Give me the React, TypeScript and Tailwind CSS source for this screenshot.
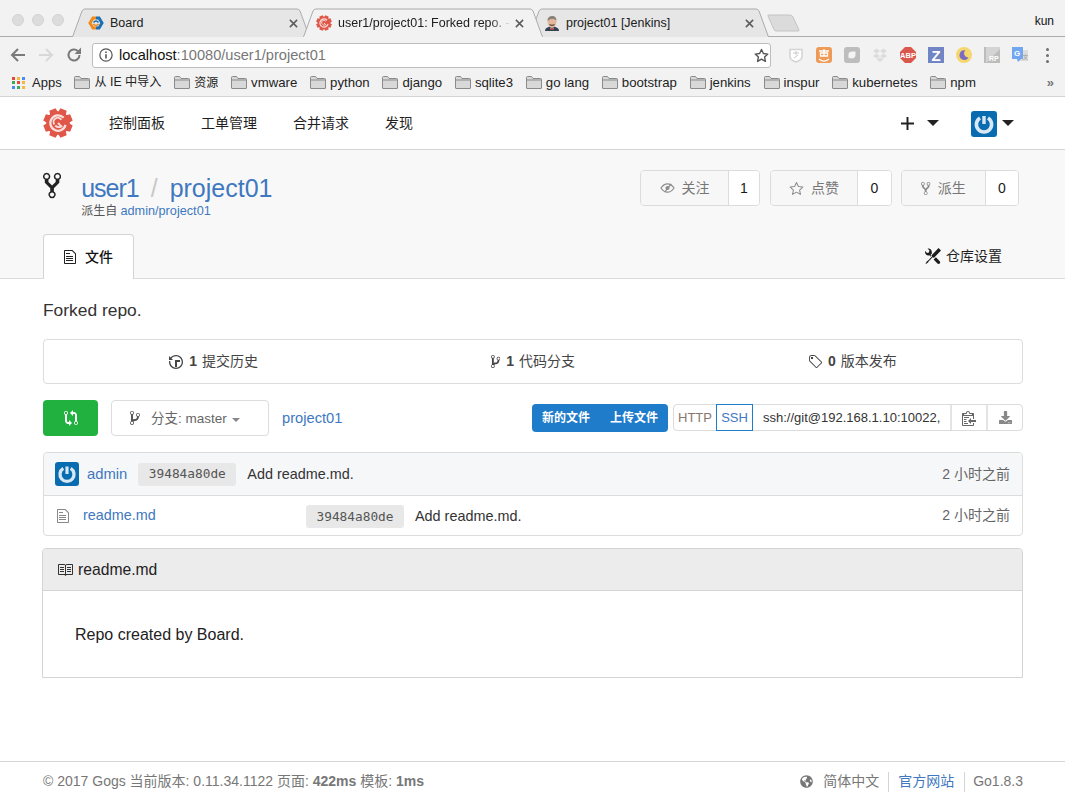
import React from "react";
import { FaDownload, FaGlobeAmericas } from "react-icons/fa";

const SANS = "font-['Liberation_Sans','Noto_Sans_CJK_SC',sans-serif]";
const P: Record<string, [number, string]> = {
  fork: [10, "M8 1a1.993 1.993 0 0 0-1 3.72V6L5 8 3 6V4.72A1.993 1.993 0 0 0 2 1a1.993 1.993 0 0 0-1 3.72V6.5l3 3v1.78A1.993 1.993 0 0 0 5 15a1.993 1.993 0 0 0 1-3.72V9.5l3-3V4.72A1.993 1.993 0 0 0 8 1zM2 4.2C1.34 4.2.8 3.65.8 3c0-.65.55-1.2 1.2-1.2.65 0 1.2.55 1.2 1.2 0 .65-.55 1.2-1.2 1.2zm3 10c-.66 0-1.2-.55-1.2-1.2 0-.65.55-1.2 1.2-1.2.65 0 1.2.55 1.2 1.2 0 .65-.55 1.2-1.2 1.2zm3-10c-.66 0-1.2-.55-1.2-1.2 0-.65.55-1.2 1.2-1.2.65 0 1.2.55 1.2 1.2 0 .65-.55 1.2-1.2 1.2z"],
  branch: [10, "M10 5c0-1.11-.89-2-2-2a1.993 1.993 0 0 0-1 3.72v.3c-.02.52-.23.98-.63 1.38-.4.4-.86.61-1.38.63-.83.02-1.48.16-2 .45V4.72a1.993 1.993 0 0 0-1-3.72C.88 1 0 1.89 0 3a2 2 0 0 0 1 1.72v6.56c-.59.35-1 .99-1 1.72 0 1.11.89 2 2 2 1.11 0 2-.89 2-2 0-.53-.2-1-.53-1.36.09-.06.48-.41.59-.47.25-.11.56-.17.94-.17 1.05-.05 1.95-.45 2.75-1.25S8.95 7.77 9 6.73h-.02C9.59 6.37 10 5.73 10 5zM2 1.8c.66 0 1.2.55 1.2 1.2 0 .65-.55 1.2-1.2 1.2C1.35 4.2.8 3.65.8 3c0-.65.55-1.2 1.2-1.2zm0 12.41c-.66 0-1.2-.55-1.2-1.2 0-.65.55-1.2 1.2-1.2.65 0 1.2.55 1.2 1.2 0 .65-.55 1.2-1.2 1.2zm6-8c-.66 0-1.2-.55-1.2-1.2 0-.65.55-1.2 1.2-1.2.65 0 1.2.55 1.2 1.2 0 .65-.55 1.2-1.2 1.2z"],
  history: [14, "M8 13H6V6h5v2H8v5zM7 1C4.81 1 2.87 2.02 1.59 3.59L0 2v4h4L2.5 4.5C3.55 3.17 5.17 2.3 7 2.3c3.14 0 5.7 2.56 5.7 5.7s-2.56 5.7-5.7 5.7A5.71 5.71 0 0 1 1.3 8c0-.34.03-.67.09-1H.08C.03 7.33 0 7.66 0 8c0 3.86 3.14 7 7 7s7-3.14 7-7-3.14-7-7-7z"],
  tag: [14, "M7.73 1.73C7.26 1.26 6.62 1 5.96 1H3.5C2.13 1 1 2.13 1 3.5v2.47c0 .66.27 1.3.73 1.77l6.06 6.06c.39.39 1.02.39 1.41 0l4.59-4.59a.996.996 0 0 0 0-1.41L7.73 1.73zM2.38 7.09c-.31-.3-.47-.7-.47-1.13V3.5c0-.88.72-1.59 1.59-1.59h2.47c.42 0 .83.16 1.13.47l6.14 6.13-4.73 4.73-6.13-6.15zM3.01 3h2v2H3V3h.01z"],
  file: [12, "M6 5H2V4h4v1zM2 8h7V7H2v1zm0 2h7V9H2v1zm0 2h7v-1H2v1zm10-7.5V14c0 .55-.45 1-1 1H1c-.55 0-1-.45-1-1V2c0-.55.45-1 1-1h7.5L12 4.5zM11 5L8 2H1v12h10V5z"],
  book: [16, "M3 5h4v1H3V5zm0 3h4V7H3v1zm0 2h4V9H3v1zm11-5h-4v1h4V5zm0 2h-4v1h4V7zm0 2h-4v1h4V9zm2-6v9c0 .55-.45 1-1 1H9.5l-1 1-1-1H2c-.55 0-1-.45-1-1V3c0-.55.45-1 1-1h5.5l1 1 1-1H15c.55 0 1 .45 1 1zm-8 .5L7.5 3H2v9h6V3.5zm7-.5H9.5l-.5.5V12h6V3z"],
  tools: [16, "M4.48 7.27c.26.26 1.28 1.33 1.28 1.33l.56-.58-.88-.91 1.69-1.8s-.76-.74-.43-.45c.32-1.19.03-2.51-.87-3.44C4.93.5 3.66.2 2.52.51l1.93 2-.51 1.96-1.89.52-1.93-2C-.19 4.17.1 5.48 1 6.4c.94.98 2.29 1.26 3.48.87zm6.44 1.94l-2.33 2.3 3.84 3.98c.31.33.73.49 1.14.49.41 0 .82-.16 1.14-.49.63-.65.63-1.7 0-2.35l-3.79-3.93zM16 2.53L13.55 0 6.33 7.46l.88.91-4.31 4.46-.99.53-1.39 2.27.35.37 2.2-1.44.51-1.02L7.9 9.08l.88.91L16 2.53z"],
  compare: [14, "M5 12H4c-.27-.02-.48-.11-.69-.31-.21-.2-.3-.42-.31-.69V4.72A1.993 1.993 0 0 0 2 1a1.993 1.993 0 0 0-1 3.72V11c.03.78.34 1.47.94 2.06.6.59 1.28.91 2.06.94h1v2l3-3-3-3v2zM2 1.8c.66 0 1.2.55 1.2 1.2 0 .65-.55 1.2-1.2 1.2C1.35 4.2.8 3.65.8 3c0-.65.55-1.2 1.2-1.2zm11 9.48V5c-.03-.78-.34-1.47-.94-2.06-.6-.59-1.28-.91-2.06-.94H9V0L6 3l3 3V4h1c.27.02.48.11.69.31.21.2.3.42.31.69v6.28A1.993 1.993 0 0 0 12 15a1.993 1.993 0 0 0 1-3.72zm-1 2.92c-.66 0-1.2-.55-1.2-1.2 0-.65.55-1.2 1.2-1.2.65 0 1.2.55 1.2 1.2 0 .65-.55 1.2-1.2 1.2z"],
  clippy: [14, "M2 13h4v1H2v-1zm5-6H2v1h5V7zm2 3V8l-3 3 3 3v-2h5v-2H9zM4.5 9H2v1h2.5V9zM2 12h2.5v-1H2v1zm9 1h1v2c-.02.28-.11.52-.3.7-.19.18-.42.28-.7.3H1c-.55 0-1-.45-1-1V4c0-.55.45-1 1-1h3c0-1.11.89-2 2-2 1.11 0 2 .89 2 2h3c.55 0 1 .45 1 1v5h-1V6H1v9h10v-2zM2 5h8c0-.55-.45-1-1-1H8c-.55 0-1-.45-1-1s-.45-1-1-1-1 .45-1 1-.45 1-1 1H3c-.55 0-1 .45-1 1z"],
};

function O({ n, h, c }: { n: string; h: number; c?: string }) {
  const [w, d] = P[n];
  return (
    <svg viewBox={`0 0 ${w} 16`} width={(w * h) / 16} height={h} fill="currentColor" className={`shrink-0 ${c ?? ""}`}>
      <path d={d} />
    </svg>
  );
}

function Star({ s, c, sw = 1.2 }: { s: number; c: string; sw?: number }) {
  return (
    <svg viewBox="0 0 16 16" width={s} height={s} className="shrink-0">
      <path d="M8 1.6l2 4.3 4.7.6-3.4 3.2.9 4.6L8 11.9l-4.2 2.4.9-4.6L1.3 6.5 6 5.9z" fill="none" stroke={c} strokeWidth={sw} strokeLinejoin="round" />
    </svg>
  );
}

function Caret({ w, h, c }: { w: number; h: number; c: string }) {
  return (
    <svg viewBox="0 0 10 5" width={w} height={h} className="shrink-0">
      <path d="M0 0h10L5 5z" fill={c} />
    </svg>
  );
}

function GogsLogo({ s }: { s: number }) {
  const teeth = [22.5, 67.5, 112.5, 157.5, 202.5, 247.5, 292.5, 337.5];
  return (
    <svg viewBox="0 0 32 32" width={s} height={s} className="shrink-0">
      {teeth.map((a) => (
        <path key={a} d="M12.4 0.5h7.2l1.2 7h-9.600z" fill="#e0574a" transform={`rotate(${a} 16 16)`} />
      ))}
      <circle cx="16" cy="16" r="12.500" fill="#e0574a" />
      <path d="M22 10.500A8.200 8.200 0 1 0 24 18" fill="none" stroke="#f9e0dc" strokeWidth="2.400" />
      <path d="M19.500 12.500A4.500 4.500 0 0 0 12 17.500" fill="none" stroke="#f9e0dc" strokeWidth="2" />
      <path d="M13 19c2.500 1.800 4.500 1.800 6.500.6l-3.500-3.600" fill="none" stroke="#f9e0dc" strokeWidth="2" />
    </svg>
  );
}

function Avatar({ s }: { s: number }) {
  return (
    <svg viewBox="0 0 26 26" width={s} height={s} className="shrink-0 rounded-[3px]">
      <rect width="26" height="26" fill="#0a6cb0" />
      <path d="M9 7a7.600 7.600 0 1 0 8 0" fill="none" stroke="#d8e9f5" strokeWidth="3.600" />
      <path d="M13 5v8" stroke="#d8e9f5" strokeWidth="3.400" />
    </svg>
  );
}

function BoardIcon() {
  return (
    <svg viewBox="0 0 16 16" width={16} height={16} className="shrink-0">
      <path d="M8 3H5L2 8l3 5h3" fill="none" stroke="#f08a1c" strokeWidth="3" />
      <path d="M8 3h3l3 5-3 5H8" fill="none" stroke="#1a6fb5" strokeWidth="3" />
      <path d="M5.500 7.500C7 5.500 9 5.500 10.500 7.500" fill="none" stroke="#1a6fb5" strokeWidth="1.600" />
      <path d="M5.500 9C7 11 9 11 10.500 9" fill="none" stroke="#f08a1c" strokeWidth="1.600" />
    </svg>
  );
}

function JenkinsIcon() {
  return (
    <svg viewBox="0 0 16 16" width={16} height={16} className="shrink-0">
      <path d="M1 16c0-3 3-4.500 7-4.500s7 1.500 7 4.500z" fill="#33404f" />
      <path d="M6.500 12.500h3v2h-3z" fill="#e8e4dc" />
      <path d="M6 14l2-1 2 1-2 1z" fill="#b3261e" />
      <ellipse cx="8" cy="7" rx="4.500" ry="5.500" fill="#e3b79b" />
      <path d="M3.500 6C3.500 2 6 1 8.500 1s4 2 4 4.500C11 3.500 6 3 3.500 6z" fill="#8a8178" />
      <path d="M5.500 9.500c1.500 1 3.500 1 5 0" fill="none" stroke="#5b4b3e" strokeWidth="1.200" />
    </svg>
  );
}

function Tab({ w, active, icon, title, z, fade, c }: { w: number; active?: boolean; icon: React.ReactNode; title: string; z: string; fade?: boolean; c: string }) {
  const fill = active ? "#f2f2f2" : "#e6e6e6";
  return (
    <div className={`relative h-[29px] shrink-0 flex items-center ${z} ${c}`} style={{ width: w }}>
      <svg className="absolute inset-0" width={w} height={29} viewBox={`0 0 ${w} 29`}>
        <path d={`M0.500 29L10 3Q11 1 13 1H${w - 13}Q${w - 11} 1 ${w - 10} 3L${w - 0.5} 29`} fill={fill} stroke="#ababab" />
        {active && <rect x="1" y="28" width={w - 2} height="1" fill={fill} />}
      </svg>
      <div className="relative flex items-center w-full pt-[1px]">
        {icon}
        <span className="ml-[6px] text-[12.500px] text-[#202020] whitespace-nowrap overflow-hidden flex-1">
          {fade ? <span className="[mask-image:linear-gradient(to_right,#000_88%,transparent)] block">{title}</span> : title}
        </span>
        <svg viewBox="0 0 10 10" width={9} height={9} className="shrink-0 ml-1">
          <path d="M1 1l8 8M9 1l-8 8" stroke="#5c5c5c" strokeWidth="1.700" />
        </svg>
      </div>
    </div>
  );
}

function FolderIcon() {
  return (
    <svg viewBox="0 0 16 13" width={16} height={13} className="shrink-0">
      <path d="M.5 12V1.500Q.5.500 1.500.500h4l1.500 2h7.500q1 0 1 1V12q0 .500-.5.500H1q-.5 0-.5-.5z" fill="#d8d8d8" stroke="#8a8a8a" />
      <path d="M.500 4h15" stroke="#8a8a8a" />
    </svg>
  );
}

function Bm({ t, c }: { t: string; c?: string }) {
  return (
    <div className="flex items-center gap-[4px] shrink-0 ml-[12.800px]">
      <FolderIcon />
      <span className={`text-[#222] whitespace-nowrap ${c ?? "text-[13.200px]"}`}>{t}</span>
    </div>
  );
}

function Ext({ children, c }: { children: React.ReactNode; c?: string }) {
  return <div className={`w-4 h-4 shrink-0 flex items-center justify-center ${c ?? "ml-[12px]"}`}>{children}</div>;
}

function Extensions() {
  return (
    <div className="flex items-center ml-[17px]">
      <Ext c="ml-0">
        <svg viewBox="0 0 16 16" width={16} height={16}>
          <path d="M2 2.500h12v7c0 3-3 4.500-6 5.500-3-1-6-2.500-6-5.500z" fill="#fff" stroke="#d3d3d3" strokeWidth="1.500" />
          <path d="M5 6h6M8 4v4M6 11l4-3" stroke="#c8c8c8" />
        </svg>
      </Ext>
      <Ext>
        <svg viewBox="0 0 16 16" width={16} height={16}>
          <rect width="16" height="16" rx="3" fill="#ee9a56" />
          <path d="M3 4h10M8 2v7M4.500 6h7v3h-7zM3 12c3 2.500 7 2.500 10 0" fill="none" stroke="#fff" strokeWidth="1.300" />
        </svg>
      </Ext>
      <Ext>
        <svg viewBox="0 0 16 16" width={16} height={16}>
          <rect width="16" height="16" rx="3" fill="#bdbdbd" />
          <path d="M4.500 11V7.500C4.500 5.500 6 4.500 8 4.500h3.500V8c0 2-1.500 3.500-3.500 3.500z" fill="#f4f4f4" />
        </svg>
      </Ext>
      <Ext>
        <svg viewBox="0 0 16 16" width={16} height={16}>
          <path d="M4.500 1.500L8 4 4.500 6.500 1 4zM11.500 1.500L15 4l-3.500 2.500L8 4zM4.500 6.500L8 9l-3.500 2.500L1 9zM11.500 6.500L15 9l-3.500 2.500L8 9zM4.500 12.500L8 10.500l3.500 2L8 15z" fill="#dcdcdc" />
        </svg>
      </Ext>
      <Ext>
        <svg viewBox="0 0 16 16" width={16} height={16}>
          <path d="M5 0h6l5 5v6l-5 5H5l-5-5V5z" fill="#d9574d" />
          <text x="8" y="10.800" textAnchor="middle" fontSize="7.500" fill="#fff" fontFamily="Liberation Sans" fontWeight="700">ABP</text>
        </svg>
      </Ext>
      <Ext>
        <div className="w-4 h-4 bg-[#7184c4] flex items-center justify-center text-[15px] leading-none font-bold text-white">Z</div>
      </Ext>
      <Ext>
        <svg viewBox="0 0 16 16" width={16} height={16}>
          <circle cx="8" cy="8" r="8" fill="#f5d76e" />
          <path d="M9.500 3.500a4.800 4.800 0 1 0 3 7 4 4 0 0 1-3-7z" fill="#7a6cc0" />
        </svg>
      </Ext>
      <Ext>
        <svg viewBox="0 0 16 16" width={16} height={16}>
          <rect width="16" height="16" fill="#d4d4d4" />
          <rect x="0" width="2" height="16" fill="#bcbcbc" />
          <path d="M2 16L16 2v14z" fill="#bdbdbd" />
          <text x="5" y="14" fontSize="7" fill="#fff" fontFamily="Liberation Sans" fontWeight="700">RP</text>
        </svg>
      </Ext>
      <Ext>
        <svg viewBox="0 0 16 16" width={16} height={16}>
          <rect x="5" y="3" width="11" height="11" fill="#dcdcdc" />
          <rect width="11" height="12" fill="#72a7f0" />
          <path d="M5 12h4l-3 3z" fill="#72a7f0" />
          <text x="2" y="9" fontSize="8" fill="#fff" fontFamily="Liberation Sans" fontWeight="700">G</text>
          <text x="10.500" y="12" fontSize="6" fill="#9a9a9a" fontFamily="Noto Sans CJK SC">文</text>
        </svg>
      </Ext>
      <div className="ml-[18px] flex flex-col gap-[3px]">
        <div className="w-[3px] h-[3px] rounded-full bg-[#6e6e6e]" />
        <div className="w-[3px] h-[3px] rounded-full bg-[#6e6e6e]" />
        <div className="w-[3px] h-[3px] rounded-full bg-[#6e6e6e]" />
      </div>
    </div>
  );
}

function Browser() {
  return (
    <div className="bg-[#f2f2f2] border-b border-[#d3d3d3]">
      <div className="relative h-[37px] border-b border-[#ababab] flex items-end">
        <div className="flex items-center gap-[8px] pl-[12px] self-start pt-[14px] w-[72px] shrink-0">
          <div className="w-3 h-3 rounded-full bg-[#dcdcdc] border border-[#d3d3d3]" />
          <div className="w-3 h-3 rounded-full bg-[#dcdcdc] border border-[#d3d3d3]" />
          <div className="w-3 h-3 rounded-full bg-[#dcdcdc] border border-[#d3d3d3]" />
        </div>
        <div className="flex items-end -mb-px">
          <Tab w={238} icon={<BoardIcon />} title="Board" z="z-0" c="pl-[16px] pr-[12px]" />
          <Tab w={240} active icon={<GogsLogo s={16} />} title="user1/project01: Forked repo. -" z="z-20" fade c="-ml-[7px] pl-[13px] pr-[19px]" />
          <Tab w={240} icon={<JenkinsIcon />} title="project01 [Jenkins]" z="z-10" c="-ml-[14px] pl-[15px] pr-[15px]" />
          <svg width={34} height={18} viewBox="0 0 34 18" className="shrink-0 -ml-[2px] mb-[5px]">
            <path d="M1 1h22q2 0 3 2l6 13q.5 1-1 1H9q-1.500 0-2-1.500L1 2z" fill="#dbdbdb" stroke="#c4c4c4" />
          </svg>
        </div>
        <span className="absolute right-[11px] top-[13px] text-[12px] text-[#111] leading-[16px]">kun</span>
      </div>
      <div className="h-[33px] pt-[3px] flex items-center">
        <div className="flex items-center pl-[10px] w-[92px] shrink-0 gap-[12px]">
          <svg viewBox="0 0 16 16" width={16} height={16} className="shrink-0">
            <path d="M15 8H2.500M8 2L2 8l6 6" fill="none" stroke="#7a7a7a" strokeWidth="2" />
          </svg>
          <svg viewBox="0 0 16 16" width={16} height={16} className="shrink-0">
            <path d="M1 8h12.500M8 2l6 6-6 6" fill="none" stroke="#d8d8d8" strokeWidth="2" />
          </svg>
          <svg viewBox="0 0 16 16" width={16} height={16} className="shrink-0">
            <path d="M13.500 8A5.500 5.500 0 1 1 11.800 4" fill="none" stroke="#7a7a7a" strokeWidth="2" />
            <path d="M15 0.500V7H8.500z" fill="#7a7a7a" />
          </svg>
        </div>
        <div className="w-[679px] h-[25px] bg-white border border-[#bdbdbd] rounded-[3px] flex items-center pl-[6px] pr-[1px] shrink-0">
          <svg viewBox="0 0 16 16" width={14} height={14} className="shrink-0">
            <circle cx="8" cy="8" r="7" fill="none" stroke="#555" strokeWidth="1.400" />
            <path d="M8 7v5M8 4v1.800" stroke="#555" strokeWidth="1.800" />
          </svg>
          <span className="ml-[6px] pt-[1px] text-[14.600px] text-[#777] flex-1 whitespace-nowrap">
            <span className="text-[#111]">localhost</span>:10080/user1/project01
          </span>
          <Star s={15} c="#555" sw={1.500} />
        </div>
        <Extensions />
      </div>
      <div className="h-[26px] flex items-center pl-[12px] pb-[1px]">
        <div className="grid grid-cols-3 gap-[1.500px] w-[13px] shrink-0">
          {["#e5493a", "#f6b83c", "#4a8af4", "#3bab59", "#e5493a", "#f6b83c", "#4a8af4", "#3bab59", "#f6b83c"].map((c, i) => (
            <div key={i} className="w-[3px] h-[3px]" style={{ background: c }} />
          ))}
        </div>
        <span className="ml-[7px] text-[13px] text-[#222]">Apps</span>
        <Bm t="从 IE 中导入" c="text-[12.200px]" />
        <Bm t="资源" c="text-[12px]" />
        <Bm t="vmware" />
        <Bm t="python" />
        <Bm t="django" />
        <Bm t="sqlite3" />
        <Bm t="go lang" />
        <Bm t="bootstrap" />
        <Bm t="jenkins" />
        <Bm t="inspur" />
        <Bm t="kubernetes" />
        <Bm t="npm" />
        <span className="ml-auto mr-[11px] text-[13px] leading-none text-[#777] font-bold">»</span>
      </div>
    </div>
  );
}

function TopNav() {
  return (
    <div className="h-[53px] flex items-center border-b border-[#d4d4d5] pl-[43px] pr-[51px] text-[14px] text-[#1f1f1f]">
      <GogsLogo s={30} />
      <span className="ml-[36px] pt-[1px]">控制面板</span>
      <span className="ml-[36px] pt-[1px]">工单管理</span>
      <span className="ml-[36px] pt-[1px]">合并请求</span>
      <span className="ml-[36px] pt-[1px]">发现</span>
      <div className="ml-auto flex items-center">
        <svg viewBox="0 0 12 12" width={13} height={13} className="shrink-0">
          <path d="M6 0v12M0 6h12" stroke="#222" strokeWidth="1.800" />
        </svg>
        <span className="ml-[13px]"><Caret w={12} h={6} c="#222" /></span>
        <span className="ml-[32px] mt-[2px]"><Avatar s={26} /></span>
        <span className="ml-[5px] -mt-[1px]"><Caret w={12} h={6} c="#222" /></span>
      </div>
    </div>
  );
}

function StatBtn({ icon, label, n, lw, rw, c }: { icon: React.ReactNode; label: string; n: string; lw: number; rw: number; c?: string }) {
  return (
    <div className={`flex h-[36px] border border-[#dcdcdc] rounded-[4px] overflow-hidden text-[14px] shrink-0 ${c ?? ""}`}>
      <div className="bg-[#f7f7f7] flex items-center justify-center gap-[7px] text-[#767676] border-r border-[#dcdcdc]" style={{ width: lw }}>
        {icon}
        <span>{label}</span>
      </div>
      <div className="bg-white flex items-center justify-center text-[#1a1a1a]" style={{ width: rw }}>{n}</div>
    </div>
  );
}

function RepoHeader() {
  return (
    <div className="bg-[#f8f8f8] border-b border-[#dcdcdc] h-[129px] px-[43px] flex flex-col justify-between">
      <div className="flex pt-[20px]">
        <O n="fork" h={29} c="text-[#222] mt-[1px]" />
        <div className="ml-[20px]">
          <div className="text-[25px] leading-[36px] text-[#4078c0] whitespace-nowrap">
            <span className="tracking-[-1px]">user1</span>
            <span className="text-[#c8c8c8] mx-[12px]">/</span>project01
          </div>
          <div className="text-[12px] leading-[12px] -mt-[1px] text-[#555]">
            派生自 <span className="text-[12.700px] text-[#4078c0]">admin/project01</span>
          </div>
        </div>
        <div className="ml-auto flex mr-[3px]">
          <StatBtn
            lw={88}
            rw={30}
            label="关注"
            n="1"
            icon={
              <svg viewBox="0 0 16 12" width={15} height={12} className="shrink-0">
                <path d="M1 6c2-3 4.500-4.500 7-4.500S13 3 15 6c-2 3-4.500 4.500-7 4.500S3 9 1 6z" fill="none" stroke="#8c8c8c" strokeWidth="1.300" />
                <path d="M5 10.500L12 1.500" stroke="#8c8c8c" strokeWidth="1.300" />
                <circle cx="8" cy="6" r="2.200" fill="#8c8c8c" />
              </svg>
            }
          />
          <StatBtn lw={87} rw={33} label="点赞" n="0" c="ml-[10px]" icon={<Star s={15} c="#8c8c8c" sw={1.100} />} />
          <StatBtn lw={84} rw={32} label="派生" n="0" c="ml-[9px]" icon={<O n="fork" h={15} c="text-[#8c8c8c]" />} />
        </div>
      </div>
      <div className="flex items-end -mb-px">
        <div className="h-[45px] w-[91px] bg-white border border-b-0 border-[#d4d4d5] rounded-t-[4px] flex items-center justify-center gap-[9px] text-[14px] text-[#111] font-medium">
          <O n="file" h={16} c="text-[#222]" />
          <span>文件</span>
        </div>
        <div className="ml-auto h-[45px] flex items-center gap-[5px] pr-[20px] text-[14px] text-[#222] pb-px">
          <O n="tools" h={16} c="text-[#1d1d1d]" />
          <span>仓库设置</span>
        </div>
      </div>
    </div>
  );
}

function StatCell({ icon, n, label }: { icon: React.ReactNode; n: string; label: string }) {
  return (
    <div className="flex-1 flex items-center justify-center">
      {icon}
      <span className="font-bold ml-[6px]">{n}</span>
      <span className="text-[14px] ml-[5px]">{label}</span>
    </div>
  );
}

function Sha() {
  return (
    <span className="h-[23px] w-[98px] rounded-[3px] bg-[#e8e8e8] text-[#555] text-[12.800px] flex items-center justify-center font-['DejaVu_Sans_Mono',monospace] shrink-0">39484a80de</span>
  );
}

export default function App() {
  return (
    <div className={`w-[1065px] h-[801px] bg-white flex flex-col overflow-hidden ${SANS}`}>
      <Browser />
      <TopNav />
      <RepoHeader />
      <div className="pl-[43px] pr-[42px] flex-1 flex flex-col">
        <div className="text-[17.400px] leading-[22px] text-[#333] mt-[20px]">Forked repo.</div>
        <div className="mt-[18px] h-[45px] border border-[#dcdcdc] rounded-[4px] flex items-center px-[10px] text-[14px] text-[#444]">
          <StatCell icon={<O n="history" h={16} c="text-[#444]" />} n="1" label="提交历史" />
          <StatCell icon={<O n="branch" h={15} c="text-[#444]" />} n="1" label="代码分支" />
          <StatCell icon={<O n="tag" h={16} c="text-[#444]" />} n="0" label="版本发布" />
        </div>
        <div className="mt-[16px] flex items-center h-[36px]">
          <div className="w-[55px] h-[36px] rounded-[4px] bg-[#21b13f] flex items-center justify-center text-white shrink-0">
            <O n="compare" h={16} />
          </div>
          <div className="ml-[13px] w-[158px] h-[36px] rounded-[4px] border border-[#dcdcdc] flex items-center pl-[18px] text-[13.500px] text-[#666] shrink-0">
            <O n="branch" h={16} c="text-[#555]" />
            <span className="ml-[11px] pt-[3px]">分支: master</span>
            <span className="ml-[5px] pt-[3px]"><Caret w={8} h={4} c="#888" /></span>
          </div>
          <span className="ml-[13px] text-[14.700px] text-[#4078c0]">project01</span>
          <div className="ml-auto w-[136px] h-[28px] bg-[#1f7ccb] rounded-[4px] flex items-center text-white text-[12px] font-bold shrink-0 -mt-[1px]">
            <span className="ml-[10px]">新的文件</span>
            <span className="ml-[20px]">上传文件</span>
          </div>
          <div className="ml-[5px] w-[350px] h-[27px] border border-[#dcdcdc] rounded-[4px] flex items-stretch shrink-0 text-[13px] -mt-[1px]">
            <div className="w-[42px] flex items-center justify-center text-[#86786e]">HTTP</div>
            <div className="w-[37px] -my-px flex items-center justify-center text-[#4078c0] border border-[#1f7ccb]">SSH</div>
            <div className="flex-1 flex items-center pl-[10px] text-[#333] overflow-hidden whitespace-nowrap">ssh://git@192.168.1.10:10022,</div>
            <div className="w-[36px] border-l-2 border-[#e4e4e4] flex items-center justify-center text-[#666]">
              <O n="clippy" h={16} />
            </div>
            <div className="w-[36px] border-l-2 border-[#e4e4e4] flex items-center justify-center text-[#888]">
              <FaDownload size={13} />
            </div>
          </div>
        </div>
        <div className="mt-[16px] border border-[#dcdcdc] rounded-[4px] text-[14.400px]">
          <div className="h-[43px] bg-[#f6f7f9] border-b border-[#dcdcdc] rounded-t-[4px] flex items-center pl-[11px] pr-[12px]">
            <Avatar s={24} />
            <span className="ml-[8px] text-[#4078c0] text-[14.800px]">admin</span>
            <span className="ml-[11px]"><Sha /></span>
            <span className="ml-[11px] text-[#333] pt-[1px]">Add readme.md.</span>
            <span className="ml-auto text-[#666] text-[14px]">2 小时之前</span>
          </div>
          <div className="h-[39px] flex items-center pl-[13px] pr-[12px]">
            <O n="file" h={16} c="text-[#888]" />
            <span className="ml-[14px] w-[223px] text-[#4078c0]">readme.md</span>
            <span className="mt-[2px]"><Sha /></span>
            <span className="ml-[11px] text-[#333] mt-[2px]">Add readme.md.</span>
            <span className="ml-auto text-[#666] text-[14px]">2 小时之前</span>
          </div>
        </div>
        <div className="mt-[12px] -ml-px border border-[#d4d4d5] rounded-t-[4px]">
          <div className="h-[42px] bg-[#ececec] border-b border-[#d4d4d5] rounded-t-[4px] flex items-center pl-[14px] text-[15.700px] font-normal text-[#222]">
            <O n="book" h={16} c="text-[#333]" />
            <span className="ml-[5px]">readme.md</span>
          </div>
          <div className="h-[86px] flex items-center pl-[32px] text-[16px] text-[#222] pt-[1px]">Repo created by Board.</div>
        </div>
      </div>
      <div className="h-[40px] border-t border-[#d4d4d5] flex items-center pl-[43px] pr-[42px] text-[14px] text-[#777]">
        <span>© 2017 Gogs 当前版本: 0.11.34.1122 页面: <b className="font-bold">422ms</b> 模板: <b className="font-bold">1ms</b></span>
        <div className="ml-auto flex items-center">
          <FaGlobeAmericas size={13} className="text-[#777]" />
          <span className="ml-[10px]">简体中文</span>
          <span className="ml-[9px] w-px h-[20px] bg-[#d4d4d5]" />
          <span className="ml-[9px] text-[#4078c0]">官方网站</span>
          <span className="ml-[10px] w-px h-[20px] bg-[#d4d4d5]" />
          <span className="ml-[8px]">Go1.8.3</span>
        </div>
      </div>
    </div>
  );
}
